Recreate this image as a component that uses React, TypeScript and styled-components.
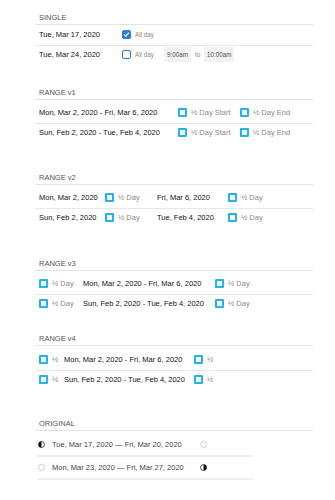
import styled, { createGlobalStyle } from "styled-components";

const GlobalStyle = createGlobalStyle`
  body {
    margin: 0;
    background: #fff;
    font-family: "Liberation Sans", Arial, sans-serif;
  }
`;

const Page = styled.div`
  width: 278px;
  margin-left: 35px;
  padding-top: 13px;
`;

const Section = styled.section<{ $top?: number }>`
  margin-top: ${(p) => p.$top ?? 0}px;
`;

const Title = styled.div`
  padding: 0 4px 1px;
  line-height: 10px;
  font-size: 7.5px;
  color: #555;
  border-bottom: 1px solid #e3e3e3;
`;

const Rows = styled.div<{ $pad: number }>`
  padding-top: ${(p) => p.$pad}px;
`;

const Row = styled.div`
  display: flex;
  align-items: center;
  height: 16px;
  padding-left: 4px;
  &:not(:last-child) {
    padding-bottom: 3px;
    border-bottom: 1px solid #e8e8e8;
  }
`;

const DateText = styled.span<{ $w?: number }>`
  width: ${(p) => (p.$w ? `${p.$w}px` : "auto")};
  flex-shrink: 0;
  font-size: 7.5px;
  color: #111;
  white-space: nowrap;
`;

const Label = styled.span<{ $w?: number; $small?: boolean }>`
  width: ${(p) => (p.$w ? `${p.$w}px` : "auto")};
  flex-shrink: 0;
  margin-left: 4px;
  font-size: ${(p) => (p.$small ? "6.3px" : "7.5px")};
  color: #8a8a8a;
  white-space: nowrap;
`;

const Box = styled.span<{ $native?: boolean; $checked?: boolean }>`
  box-sizing: border-box;
  display: inline-flex;
  align-items: center;
  justify-content: center;
  width: 9px;
  height: 9px;
  flex-shrink: 0;
  border-radius: ${(p) => (p.$native ? "2px" : "1px")};
  border: ${(p) => (p.$native ? "1px" : "2px")} solid ${(p) => (p.$native ? "#2b7fd9" : "#22b2f2")};
  background: ${(p) => (p.$checked ? "#2b7fd9" : "#fff")};
`;

const TimeBox = styled.span<{ $w: number }>`
  display: inline-flex;
  align-items: center;
  justify-content: center;
  width: ${(p) => p.$w}px;
  height: 15px;
  background: #f2f2f2;
  font-size: 6.3px;
  color: #555;
`;

const To = styled.span`
  margin: 0 4px 0 4px;
  font-size: 6.3px;
  color: #888;
`;

const Spacer = styled.span<{ $w: number }>`
  width: ${(p) => p.$w}px;
  flex-shrink: 0;
`;

const OrigRows = styled.div`
  width: 216px;
  margin-left: 2px;
  padding-top: 3px;
`;

const OrigRow = styled.div`
  display: flex;
  align-items: center;
  height: 21px;
  padding-left: 1px;
  border-bottom: 2px solid #efefef;
`;

const OrigText = styled.span`
  width: 148px;
  margin-left: 7px;
  font-size: 7.5px;
  color: #444;
  white-space: nowrap;
`;

const Check = ({ checked, native }: { checked?: boolean; native?: boolean }) => (
  <Box $checked={checked} $native={native}>
    {checked && (
      <svg width="7" height="7" viewBox="0 0 7 7">
        <polyline points="1.2,3.6 2.8,5.1 5.9,1.6" fill="none" stroke="#fff" strokeWidth="1.2" />
      </svg>
    )}
  </Box>
);

const Half = ({ fill }: { fill?: "left" | "right" }) => (
  <svg width="7" height="7" viewBox="0 0 7 7">
    <circle cx="3.5" cy="3.5" r="3" fill="#fff" stroke={fill ? "#111" : "#bbb"} strokeWidth="0.7" />
    {fill === "left" && <path d="M3.5 0.5 A3 3 0 0 0 3.5 6.5 Z" fill="#111" />}
    {fill === "right" && <path d="M3.5 0.5 A3 3 0 0 1 3.5 6.5 Z" fill="#111" />}
  </svg>
);

const rangeDates = [
  ["Mon, Mar 2, 2020", "Fri, Mar 6, 2020"],
  ["Sun, Feb 2, 2020", "Tue, Feb 4, 2020"],
];

export default function App() {
  return (
    <Page>
      <GlobalStyle />
      <Section>
        <Title>SINGLE</Title>
        <Rows $pad={1}>
          <Row>
            <DateText $w={83}>Tue, Mar 17, 2020</DateText>
            <Check native checked />
            <Label $small>All day</Label>
          </Row>
          <Row>
            <DateText $w={83}>Tue, Mar 24, 2020</DateText>
            <Check native />
            <Label $small $w={29}>All day</Label>
            <TimeBox $w={27}>9:00am</TimeBox>
            <To>to</To>
            <TimeBox $w={30}>10:00am</TimeBox>
          </Row>
        </Rows>
      </Section>

      <Section $top={26}>
        <Title>RANGE v1</Title>
        <Rows $pad={4}>
          {rangeDates.map(([a, b]) => (
            <Row key={a}>
              <DateText $w={139}>{a} - {b}</DateText>
              <Check />
              <Label $w={49}>½ Day Start</Label>
              <Check />
              <Label>½ Day End</Label>
            </Row>
          ))}
        </Rows>
      </Section>

      <Section $top={33}>
        <Title>RANGE v2</Title>
        <Rows $pad={4}>
          {rangeDates.map(([a, b]) => (
            <Row key={a}>
              <DateText $w={66}>{a}</DateText>
              <Check />
              <Label $w={39}>½ Day</Label>
              <DateText $w={71}>{b}</DateText>
              <Check />
              <Label>½ Day</Label>
            </Row>
          ))}
        </Rows>
      </Section>

      <Section $top={34}>
        <Title>RANGE v3</Title>
        <Rows $pad={4}>
          {rangeDates.map(([a, b]) => (
            <Row key={a}>
              <Check />
              <Label $w={27}>½ Day</Label>
              <Spacer $w={4} />
              <DateText $w={132}>{a} - {b}</DateText>
              <Check />
              <Label>½ Day</Label>
            </Row>
          ))}
        </Rows>
      </Section>

      <Section $top={23}>
        <Title>RANGE v4</Title>
        <Rows $pad={5}>
          {rangeDates.map(([a, b]) => (
            <Row key={a}>
              <Check />
              <Label $w={8}>½</Label>
              <Spacer $w={4} />
              <DateText $w={130}>{a} - {b}</DateText>
              <Check />
              <Label>½</Label>
            </Row>
          ))}
        </Rows>
      </Section>

      <Section $top={32}>
        <Title>ORIGINAL</Title>
        <OrigRows>
          <OrigRow>
            <Half fill="left" />
            <OrigText>Tue, Mar 17, 2020 — Fri, Mar 20, 2020</OrigText>
            <Half />
          </OrigRow>
          <OrigRow>
            <Half />
            <OrigText>Mon, Mar 23, 2020 — Fri, Mar 27, 2020</OrigText>
            <Half fill="right" />
          </OrigRow>
        </OrigRows>
      </Section>
    </Page>
  );
}
